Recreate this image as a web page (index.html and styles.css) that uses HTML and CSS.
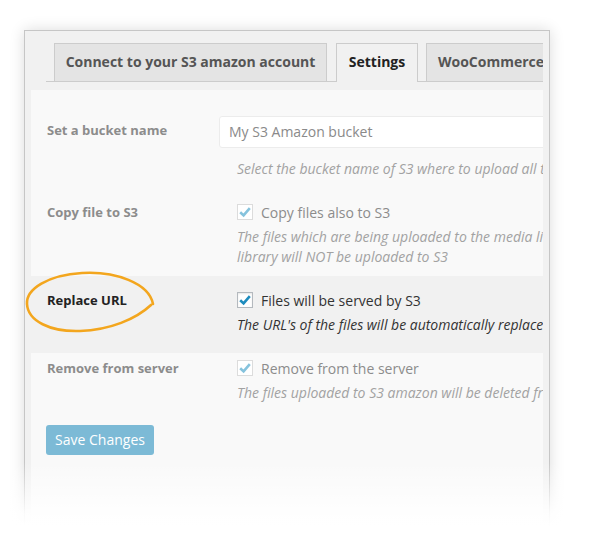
FILE: index.html
```html
<!DOCTYPE html>
<html>
<head>
<meta charset="utf-8">
<link rel="stylesheet" href="styles.css">
</head>
<body>
<div class="frame">
  <div class="inner">
    <nav class="tabs">
      <span class="tab tab-connect">Connect to your S3 amazon account</span>
      <span class="tab tab-settings active">Settings</span>
      <span class="tab tab-woo">WooCommerce</span>
    </nav>
    <div class="content">
      <div class="row row-bucket faded">
        <div class="label label-tall">Set a bucket name</div>
        <div class="field">
          <div class="input">My S3 Amazon bucket</div>
          <p class="desc">Select the bucket name of S3 where to upload all the files</p>
        </div>
      </div>
      <div class="row row-copy faded">
        <div class="label">Copy file to S3</div>
        <div class="field">
          <div class="check-line">
            <span class="checkbox"><svg viewBox="0 0 16 16" width="16" height="16"><polyline points="3.2,8.2 6.6,11.4 12.8,4.2" fill="none" stroke-width="2.6"/></svg></span>
            <span class="check-text">Copy files also to S3</span>
          </div>
          <p class="desc">The files which are being uploaded to the media library will also be uploaded to S3. If unchecked, files in the media<br>library will NOT be uploaded to S3</p>
        </div>
      </div>
      <div class="row row-replace">
        <div class="label">Replace URL</div>
        <div class="field">
          <div class="check-line">
            <span class="checkbox"><svg viewBox="0 0 16 16" width="16" height="16"><polyline points="3.2,8.2 6.6,11.4 12.8,4.2" fill="none" stroke-width="2.6"/></svg></span>
            <span class="check-text">Files will be served by S3</span>
          </div>
          <p class="desc">The URL's of the files will be automatically replaced by the S3 URL</p>
        </div>
      </div>
      <div class="row row-remove faded">
        <div class="label">Remove from server</div>
        <div class="field">
          <div class="check-line">
            <span class="checkbox"><svg viewBox="0 0 16 16" width="16" height="16"><polyline points="3.2,8.2 6.6,11.4 12.8,4.2" fill="none" stroke-width="2.6"/></svg></span>
            <span class="check-text">Remove from the server</span>
          </div>
          <p class="desc">The files uploaded to S3 amazon will be deleted from the server</p>
        </div>
      </div>
      <div class="actions">
        <span class="button">Save Changes</span>
      </div>
    </div>
  </div>
</div>
<svg class="circle" width="600" height="535" viewBox="0 0 600 535">
  <path d="M153 304 C149 283 115 271 82 273 C48 275 26 289 27 304 C28 321 50 332 80 331 C110 330 136 319 151 305" fill="none" stroke="#f3a61e" stroke-width="2.6" stroke-linecap="round"/>
</svg>
<div class="fade"></div>
</body>
</html>
```

FILE: styles.css
```css
html, body {
  margin: 0;
  padding: 0;
  background: #ffffff;
}
html {
  overflow: hidden;
}
body {
  position: relative;
  width: 600px;
  height: 535px;
  overflow: hidden;
  font-family: "Open Sans", "Noto Sans", sans-serif;
  color: #333;
}
.frame {
  margin: 30px 0 0 24px;
  width: 512px;
  height: 490px;
  padding: 12px 6px 0 6px;
  border: 1px solid #c6c6c6;
  background: #f1f1f1;
  box-shadow: 0 0 14px rgba(0, 0, 0, 0.14);
}
.inner {
  width: 512px;
  height: 100%;
  overflow: hidden;
}
.tabs {
  display: flex;
  align-items: flex-end;
  height: 38px;
  margin-left: 15px;
  padding-left: 8px;
  border-bottom: 1px solid #cccccc;
  white-space: nowrap;
}
.tab {
  box-sizing: border-box;
  flex: none;
  height: 38px;
  border: 1px solid #cccccc;
  border-bottom: none;
  background: #e4e4e4;
  color: #555;
  font-weight: 700;
  font-size: 14px;
  line-height: 36px;
  text-align: center;
}
.tab-connect { width: 273px; }
.tab-settings { width: 82px; margin-left: 9px; }
.tab-woo { width: 140px; margin-left: 8px; text-align: left; padding-left: 11px; }
.tab.active {
  height: 39px;
  margin-bottom: -1px;
  background: #f1f1f1;
  color: #222;
}
.content {
  margin-top: 8px;
  height: 440px;
  background: #f9f9f9;
  white-space: nowrap;
  overflow: hidden;
}
.row {
  display: grid;
  grid-template-columns: 188px 1fr;
}
.label {
  padding-left: 16px;
  font-size: 13px;
  font-weight: 700;
  line-height: 20px;
  color: #222;
}
.label-tall { line-height: 29px; }
.field { min-width: 0; overflow: hidden; }
.input {
  box-sizing: border-box;
  width: 420px;
  height: 32px;
  padding-left: 9px;
  border: 1px solid #ececec;
  border-radius: 3px;
  background: #ffffff;
  font-size: 14px;
  line-height: 30px;
  color: #8a8a8a;
}
.desc {
  margin: 5px 0 0 18px;
  font-size: 14px;
  font-style: italic;
  line-height: 20px;
  color: #333;
}
.check-line {
  display: flex;
  align-items: center;
  height: 20px;
  margin-left: 18px;
}
.checkbox {
  box-sizing: border-box;
  width: 16px;
  height: 16px;
  border: 1px solid #b4b9be;
  background: #fff;
  box-shadow: inset 0 1px 2px rgba(0, 0, 0, 0.1);
  display: flex;
}
.checkbox svg {
  margin: -1px;
  stroke: #1e8cbe;
}
.check-text {
  margin-left: 8px;
  font-size: 14px;
  color: #333;
}
.faded .label,
.faded .check-text { color: #8c8c8c; }
.faded .desc { color: #a2a2a2; }
.faded .checkbox { border-color: #dcdcdc; box-shadow: none; }
.faded .checkbox svg { stroke: #86c3dd; }

.row-bucket { padding-top: 26px; }
.row-bucket .desc { margin-top: 11px; }
.row-copy { padding: 23px 0 9px; }
.row-replace {
  padding: 14px 0 18px;
  background: #f1f1f1;
}
.row-remove { padding-top: 5px; }
.actions {
  padding: 22px 0 0 15px;
}
.button {
  display: inline-block;
  width: 108px;
  height: 30px;
  border-radius: 3px;
  background: #7cbad6;
  color: #fff;
  font-size: 14px;
  line-height: 30px;
  text-align: center;
}
.circle {
  position: absolute;
  left: 0;
  top: 0;
  pointer-events: none;
}
.fade {
  position: absolute;
  left: 0;
  top: 462px;
  width: 600px;
  height: 73px;
  background: linear-gradient(to bottom, rgba(255,255,255,0) 0%, rgba(255,255,255,0.9) 70%, #ffffff 88%);
}
```
